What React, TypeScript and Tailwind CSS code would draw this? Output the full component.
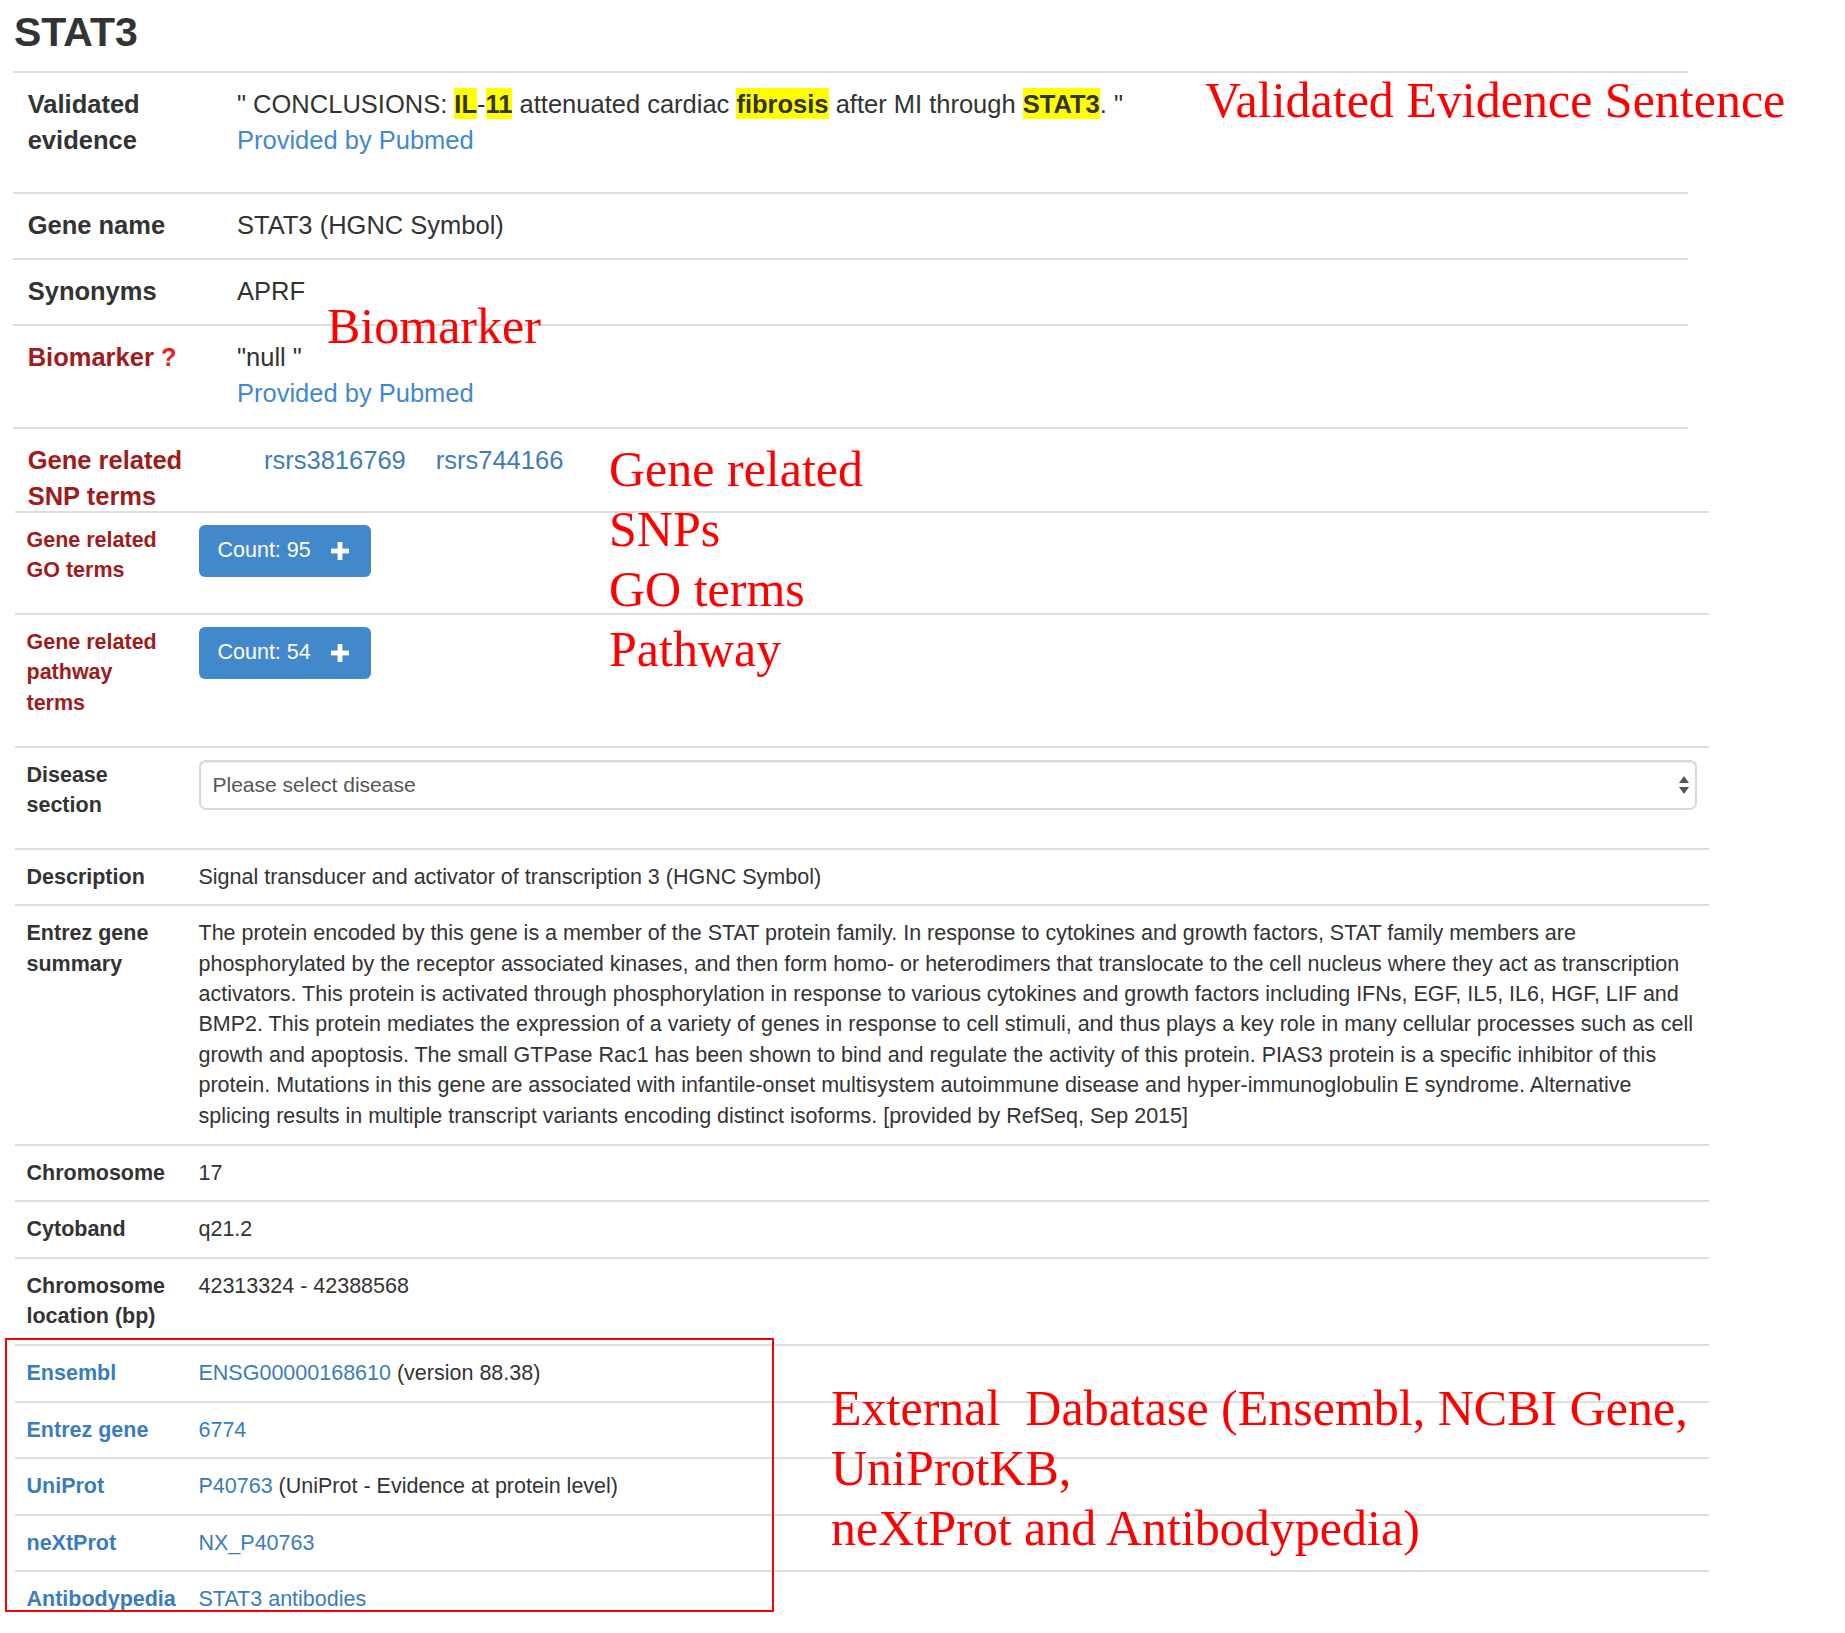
import React from "react";

const summaryLines = [
  "The protein encoded by this gene is a member of the STAT protein family. In response to cytokines and growth factors, STAT family members are",
  "phosphorylated by the receptor associated kinases, and then form homo- or heterodimers that translocate to the cell nucleus where they act as transcription",
  "activators. This protein is activated through phosphorylation in response to various cytokines and growth factors including IFNs, EGF, IL5, IL6, HGF, LIF and",
  "BMP2. This protein mediates the expression of a variety of genes in response to cell stimuli, and thus plays a key role in many cellular processes such as cell",
  "growth and apoptosis. The small GTPase Rac1 has been shown to bind and regulate the activity of this protein. PIAS3 protein is a specific inhibitor of this",
  "protein. Mutations in this gene are associated with infantile-onset multisystem autoimmune disease and hyper-immunoglobulin E syndrome. Alternative",
  "splicing results in multiple transcript variants encoding distinct isoforms. [provided by RefSeq, Sep 2015]",
];

function URow({
  label,
  children,
  pb,
  labelColor = "text-[#333333]",
  h = "",
}: {
  label: React.ReactNode;
  children: React.ReactNode;
  pb: string;
  labelColor?: string;
  h?: string;
}) {
  return (
    <div className={`flex border-t-2 border-[#dedede] pt-[14.3px] ${pb} ${h}`}>
      <div className={`w-[209.7px] shrink-0 pl-[14.7px] pr-[14.3px] font-bold ${labelColor}`}>{label}</div>
      <div className="flex-1 pl-[14.3px] pr-[14.3px]">{children}</div>
    </div>
  );
}

function LRow({
  label,
  children,
  pb = "pb-[12px]",
  labelColor = "text-[#333333]",
}: {
  label: React.ReactNode;
  children: React.ReactNode;
  pb?: string;
  labelColor?: string;
}) {
  return (
    <div className={`flex border-t-2 border-[#dedede] pt-[12px] ${pb}`}>
      <div className={`w-[172px] shrink-0 pl-[12px] pr-[8px] font-bold ${labelColor}`}>{label}</div>
      <div className="flex-1 min-w-0 pl-[12px] pr-[12px]">{children}</div>
    </div>
  );
}

function Hl({ children }: { children: React.ReactNode }) {
  return <span className="bg-[#ffff00] font-bold py-[1.5px]">{children}</span>;
}

function PlusIcon() {
  return (
    <svg width="20" height="20" viewBox="0 0 20 20" className="ml-[19px]">
      <rect x="7.6" y="1" width="4.8" height="18" fill="#ffffff" />
      <rect x="1" y="7.6" width="18" height="4.8" fill="#ffffff" />
    </svg>
  );
}

function CountButton({ n }: { n: number }) {
  return (
    <div className="inline-flex items-center h-[52px] w-[172px] rounded-[6px] bg-[#4289cc] pl-[19px] text-white text-[21.5px]">
      <span className="leading-none">Count: {n}</span>
      <PlusIcon />
    </div>
  );
}

export default function App() {
  const ext = "text-[#3a7cc0]";
  return (
    <div className="relative w-[1845px] h-[1633px] overflow-hidden bg-white text-[#333333] font-['Liberation_Sans',Arial,Helvetica,sans-serif]">
      <h2 className="pl-[14px] pt-[12px] text-[41px] leading-[41px] font-bold text-[#333333]">STAT3</h2>

      {/* upper table */}
      <div className="ml-[13px] mt-[17.7px] w-[1675px] text-[25.5px] leading-[35.7px]">
        <URow
          pb="pb-[33.3px]"
          label={
            <>
              Validated
              <br />
              evidence
            </>
          }
        >
          <div>
            " CONCLUSIONS: <Hl>IL</Hl>-<Hl>11</Hl> attenuated cardiac <Hl>fibrosis</Hl> after MI through{" "}
            <Hl>STAT3</Hl>. "
          </div>
          <div className="text-[#4289d0]">Provided by Pubmed</div>
        </URow>
        <URow pb="pb-[14.3px]" label="Gene name">
          STAT3 (HGNC Symbol)
        </URow>
        <URow pb="pb-[14px]" label="Synonyms">
          APRF
        </URow>
        <URow
          pb="pb-[15px]"
          labelColor="text-[#a01c1c]"
          label={
            <>
              Biomarker <span className="text-[#ee2020]">?</span>
            </>
          }
        >
          <div>"null "</div>
          <div className="text-[#4289d0]">Provided by Pubmed</div>
        </URow>
        <URow
          pb="pb-0"
          h="h-[84px]"
          labelColor="text-[#a01c1c]"
          label={
            <>
              Gene related
              <br />
              SNP terms
            </>
          }
        >
          <div className="flex gap-[30px] pl-[27px] text-[#3f7cb9]">
            <span>rsrs3816769</span>
            <span>rsrs744166</span>
          </div>
        </URow>
      </div>

      {/* lower table */}
      <div className="ml-[14.5px] w-[1694.5px] text-[21.5px] leading-[30.4px]">
        <LRow
          pb="pb-[27.5px]"
          labelColor="text-[#a01c1c]"
          label={
            <>
              Gene related
              <br />
              GO terms
            </>
          }
        >
          <CountButton n={95} />
        </LRow>
        <LRow
          pb="pb-[27.5px]"
          labelColor="text-[#a01c1c]"
          label={
            <>
              Gene related
              <br />
              pathway
              <br />
              terms
            </>
          }
        >
          <CountButton n={54} />
        </LRow>
        <LRow
          pb="pb-[27.2px]"
          label={
            <>
              Disease
              <br />
              section
            </>
          }
        >
          <div className="flex items-center justify-between h-[50px] rounded-[7px] border-2 border-[#d9d9d9] shadow-[inset_0_1px_1px_rgba(0,0,0,0.06)] pl-[12px] pr-[6px] text-[21px] text-[#555555]">
            <span>Please select disease</span>
            <svg width="10" height="18" viewBox="0 0 10 18">
              <polygon points="5,0 10,7 0,7" fill="#555555" />
              <polygon points="0,11 10,11 5,18" fill="#555555" />
            </svg>
          </div>
        </LRow>
        <LRow label="Description">Signal transducer and activator of transcription 3 (HGNC Symbol)</LRow>
        <LRow
          pb="pb-[13px]"
          label={
            <>
              Entrez gene
              <br />
              summary
            </>
          }
        >
          {summaryLines.map((l) => (
            <div key={l} className="whitespace-nowrap">
              {l}
            </div>
          ))}
        </LRow>
        <LRow label="Chromosome">17</LRow>
        <LRow label="Cytoband">q21.2</LRow>
        <LRow
          pb="pb-[12.9px]"
          label={
            <>
              Chromosome
              <br />
              location (bp)
            </>
          }
        >
          42313324 - 42388568
        </LRow>
        <LRow labelColor={ext} label="Ensembl">
          <span className={ext}>ENSG00000168610</span> (version 88.38)
        </LRow>
        <LRow labelColor={ext} label="Entrez gene">
          <span className={ext}>6774</span>
        </LRow>
        <LRow labelColor={ext} label="UniProt">
          <span className={ext}>P40763</span> (UniProt - Evidence at protein level)
        </LRow>
        <LRow labelColor={ext} label="neXtProt">
          <span className={ext}>NX_P40763</span>
        </LRow>
        <LRow labelColor={ext} label="Antibodypedia">
          <span className={ext}>STAT3 antibodies</span>
        </LRow>
      </div>

      {/* red annotation box */}
      <div className="absolute left-[4.7px] top-[1338px] w-[769px] h-[274px] border-2 border-[#ff0000]" />

      {/* annotations */}
      <div className="absolute left-[1205px] top-[69.8px] whitespace-nowrap text-[50px] leading-[60px] text-[#ff0000] font-['Liberation_Serif','Times_New_Roman',serif]">
        Validated Evidence Sentence
      </div>
      <div className="absolute left-[327px] top-[296.4px] whitespace-nowrap text-[50px] leading-[60px] text-[#ff0000] font-['Liberation_Serif','Times_New_Roman',serif]">
        Biomarker
      </div>
      <div className="absolute left-[609px] top-[439.1px] whitespace-nowrap text-[50px] leading-[60px] text-[#ff0000] font-['Liberation_Serif','Times_New_Roman',serif]">
        <div>Gene related</div>
        <div>SNPs</div>
        <div>GO terms</div>
        <div>Pathway</div>
      </div>
      <div className="absolute left-[831px] top-[1378.1px] whitespace-pre text-[50px] leading-[60px] text-[#ff0000] font-['Liberation_Serif','Times_New_Roman',serif]">
        <div>External  Dabatase (Ensembl, NCBI Gene,</div>
        <div>UniProtKB,</div>
        <div>neXtProt and Antibodypedia)</div>
      </div>
    </div>
  );
}
